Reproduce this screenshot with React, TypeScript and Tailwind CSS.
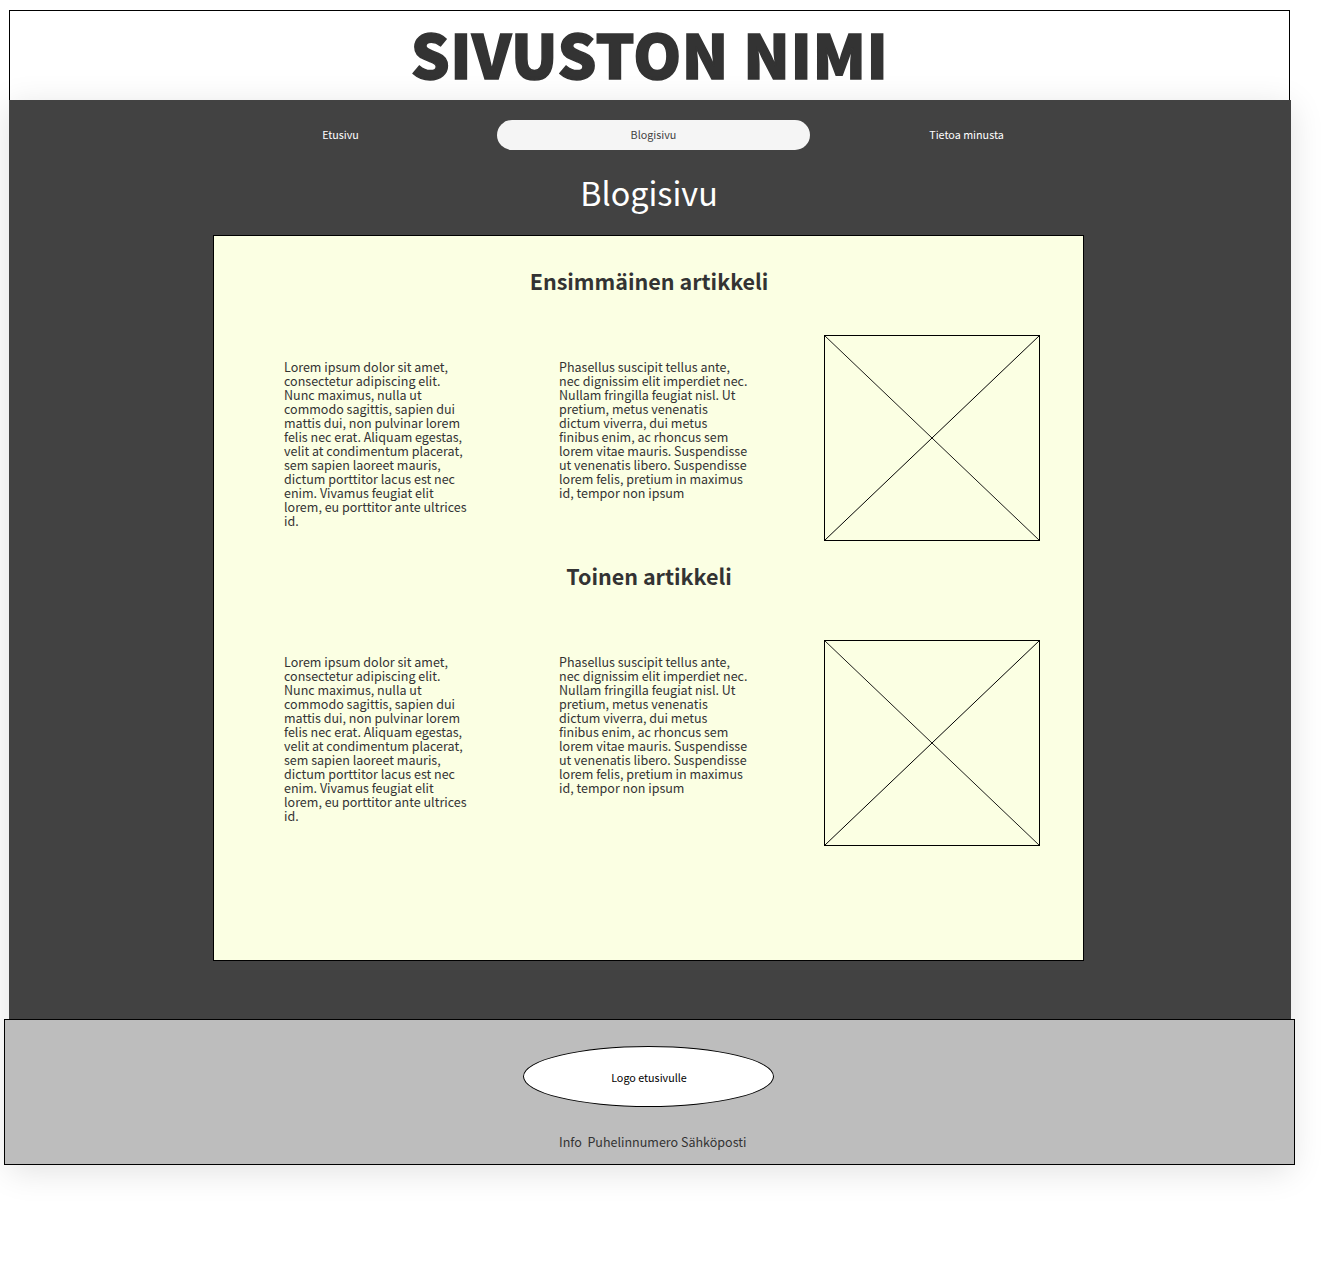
const left = [
  'Lorem ipsum dolor sit amet,',
  'consectetur adipiscing elit.',
  'Nunc maximus, nulla ut',
  'commodo sagittis, sapien dui',
  'mattis dui, non pulvinar lorem',
  'felis nec erat. Aliquam egestas,',
  'velit at condimentum placerat,',
  'sem sapien laoreet mauris,',
  'dictum porttitor lacus est nec',
  'enim. Vivamus feugiat elit',
  'lorem, eu porttitor ante ultrices',
  'id.',
];
const middle = [
  'Phasellus suscipit tellus ante,',
  'nec dignissim elit imperdiet nec.',
  'Nullam fringilla feugiat nisl. Ut',
  'pretium, metus venenatis',
  'dictum viverra, dui metus',
  'finibus enim, ac rhoncus sem',
  'lorem vitae mauris. Suspendisse',
  'ut venenatis libero. Suspendisse',
  'lorem felis, pretium in maximus',
  'id, tempor non ipsum',
];

function Lines({ lines }: { lines: string[] }) {
  return (
    <p>
      {lines.map((line) => (
        <span key={line} className="block">{line}</span>
      ))}
    </p>
  );
}

function Placeholder() {
  return (
    <svg width="216" height="206" viewBox="0 0 216 206" fill="none" stroke="black" strokeWidth="1">
      <rect x="0.5" y="0.5" width="215" height="205" />
      <path d="M0.5 0.5 L215.5 205.5" strokeWidth="0.9" />
      <path d="M215.5 0.5 L0.5 205.5" />
    </svg>
  );
}

function Article({ title, row, text }: { title: string; row: string; text: string }) {
  return (
    <article>
      <h2 className="pl-px text-center text-[21.5px] leading-[30px] font-bold text-[#333]">{title}</h2>
      <div className={`ml-[70px] flex text-[12.53px] leading-[14px] whitespace-nowrap text-[#333] ${row}`}>
        <div className={`w-[275px] ${text}`}><Lines lines={left} /></div>
        <div className={`w-[265px] ${text}`}><Lines lines={middle} /></div>
        <Placeholder />
      </div>
    </article>
  );
}

export default function App() {
  return (
    <div className="h-[1264px] w-[1338px] overflow-hidden bg-white pt-[10px] font-['Noto_Sans_CJK_SC',sans-serif]">
      <header className="ml-[9px] h-[90px] w-[1281px] border border-b-0 border-black text-center">
        <h1 className="-mt-[3px] text-[61px] leading-[90px] font-black tracking-[0.55px] text-[#333] [-webkit-text-stroke:1.5px_#333]">SIVUSTON NIMI</h1>
      </header>
      <div className="relative ml-[9px] w-[1282px] shadow-[0_6px_32px_rgba(0,0,0,0.12)]">
        <main className="h-[919px] bg-[#424242] pt-5">
          <nav className="ml-[175px] flex h-[30px] text-[10.75px] leading-[29px] text-white">
            <a className="w-[313px] text-center">Etusivu</a>
            <a className="w-[313px] rounded-full bg-[#f5f5f5] text-center text-[#424242]">Blogisivu</a>
            <a className="w-[313px] text-center">Tietoa minusta</a>
          </nav>
          <h2 className="mt-[17px] h-[68px] pr-[2px] text-center text-[32.3px] leading-[50px] text-white">Blogisivu</h2>
          <section className="ml-[204px] h-[726px] w-[871px] border border-black bg-[#fbffe3] pt-[30px]">
            <Article title="Ensimmäinen artikkeli" row="mt-[39px]" text="pt-[25px]" />
            <div className="h-5" />
            <Article title="Toinen artikkeli" row="mt-[49px]" text="pt-[15px]" />
          </section>
        </main>
        <footer className="-ml-[5px] h-[146px] w-[1291px] border border-black bg-[#bdbdbd] pt-[26px]">
          <div className="ml-[518px] h-[61px] w-[251px] rounded-[50%] border border-black bg-white pl-px text-center text-[10.75px] leading-[61px]">Logo etusivulle</div>
          <p className="mt-[25px] ml-[554px] text-[12.53px] leading-[20px] whitespace-pre text-[#333]">Info  Puhelinnumero Sähköposti</p>
        </footer>
      </div>
    </div>
  );
}
